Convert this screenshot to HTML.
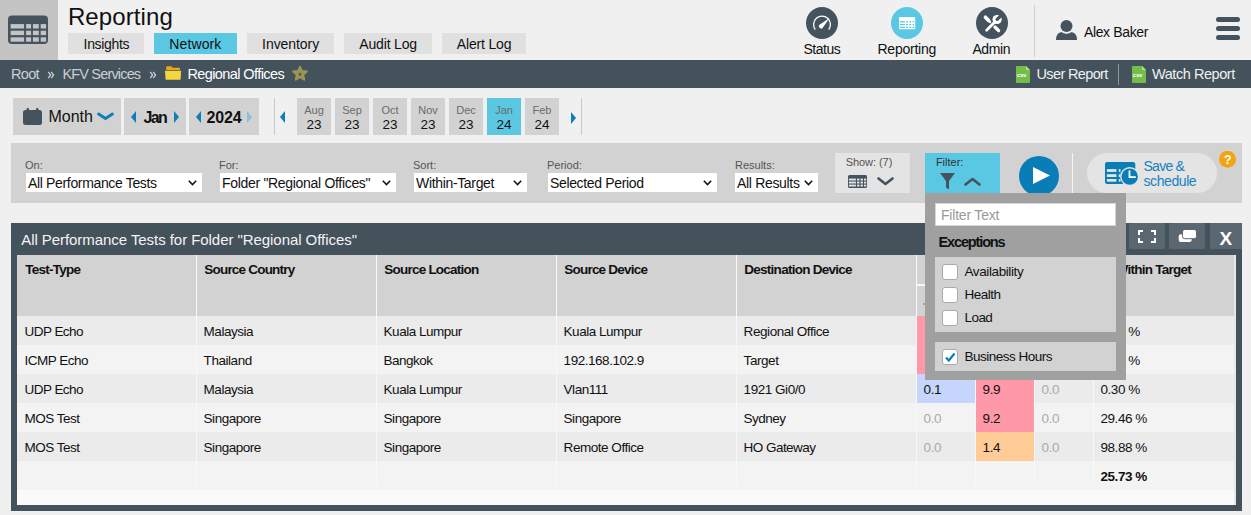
<!DOCTYPE html>
<html><head><meta charset="utf-8">
<style>
*{margin:0;padding:0;box-sizing:border-box}
html,body{width:1251px;height:515px;overflow:hidden;background:#f0f0f0;font-family:"Liberation Sans",sans-serif;color:#111}
.a{position:absolute}
.t{position:absolute;white-space:nowrap;line-height:1}
svg{position:absolute;display:block}
</style></head><body>
<div class="a" style="left:0px;top:0px;width:58px;height:60px;background:#c4c4c4;"></div>
<svg style="left:8px;top:15px" width="40" height="30" viewBox="0 0 40 30">
  <rect x="0" y="0.5" width="40" height="28.5" rx="4" fill="#45535e"/>
  <g fill="#c4c4c4">
    <rect x="2.6" y="9.1" width="13.5" height="4.4"/><rect x="18.1" y="9.1" width="5" height="4.4"/><rect x="24.9" y="9.1" width="5.9" height="4.4"/><rect x="32.7" y="9.1" width="5.4" height="4.4"/>
    <rect x="2.6" y="15.7" width="13.5" height="4.4"/><rect x="18.1" y="15.7" width="5" height="4.4"/><rect x="24.9" y="15.7" width="5.9" height="4.4"/><rect x="32.7" y="15.7" width="5.4" height="4.4"/>
    <rect x="2.6" y="22.3" width="13.5" height="4.4"/><rect x="18.1" y="22.3" width="5" height="4.4"/><rect x="24.9" y="22.3" width="5.9" height="4.4"/><rect x="32.7" y="22.3" width="5.4" height="4.4"/>
  </g>
</svg>
<div class="t" style="left:67.90px;top:4.88px;font-size:24px;color:#111;letter-spacing:0.104px;">Reporting</div>
<div class="a" style="left:68px;top:33px;width:76px;height:21px;background:#e0e0e0;"></div>
<div class="t" style="left:83.60px;top:37.05px;font-size:14px;color:#111;letter-spacing:-0.331px;">Insights</div>
<div class="a" style="left:154px;top:33px;width:83px;height:21px;background:#5bc8e3;"></div>
<div class="t" style="left:169.30px;top:37.05px;font-size:14px;color:#111;letter-spacing:0.122px;">Network</div>
<div class="a" style="left:247px;top:33px;width:87px;height:21px;background:#e0e0e0;"></div>
<div class="t" style="left:262.10px;top:37.05px;font-size:14px;color:#111;letter-spacing:-0.065px;">Inventory</div>
<div class="a" style="left:344px;top:33px;width:88px;height:21px;background:#e0e0e0;"></div>
<div class="t" style="left:359.30px;top:37.05px;font-size:14px;color:#111;letter-spacing:-0.173px;">Audit Log</div>
<div class="a" style="left:442px;top:33px;width:84px;height:21px;background:#e0e0e0;"></div>
<div class="t" style="left:456.80px;top:37.05px;font-size:14px;color:#111;letter-spacing:-0.171px;">Alert Log</div>
<svg style="left:806px;top:7px" width="32" height="32" viewBox="0 0 32 32">
  <circle cx="16" cy="16" r="16" fill="#45535e"/>
  <path d="M9.3 22.6 A8.4 8.4 0 1 1 22.7 22.6" fill="none" stroke="#fff" stroke-width="1.3"/>
  <path d="M23.6 10.9 L13.9 17.6 A2.1 2.1 0 1 0 16.9 20.4 Z" fill="#fff"/>
</svg>
<div class="t" style="left:803.40px;top:41.95px;font-size:14px;color:#111;letter-spacing:-0.465px;">Status</div>
<svg style="left:891px;top:7px" width="32" height="32" viewBox="0 0 32 32">
  <circle cx="16" cy="16" r="16" fill="#5bc8e3"/>
  <rect x="8" y="10" width="16.2" height="12.2" rx="1" fill="#fff"/>
  <g fill="#5bc8e3">
    <rect x="8.8" y="14.1" width="5.1" height="1.3"/><rect x="15" y="14.1" width="1.9" height="1.3"/><rect x="18.3" y="14.1" width="1.9" height="1.3"/><rect x="21.6" y="14.1" width="1.6" height="1.3"/>
    <rect x="8.8" y="16.9" width="5.1" height="1.3"/><rect x="15" y="16.9" width="1.9" height="1.3"/><rect x="18.3" y="16.9" width="1.9" height="1.3"/><rect x="21.6" y="16.9" width="1.6" height="1.3"/>
    <rect x="8.8" y="19.7" width="5.1" height="1.3"/><rect x="15" y="19.7" width="1.9" height="1.3"/><rect x="18.3" y="19.7" width="1.9" height="1.3"/><rect x="21.6" y="19.7" width="1.6" height="1.3"/>
  </g>
</svg>
<div class="t" style="left:877.50px;top:41.95px;font-size:14px;color:#111;letter-spacing:-0.245px;">Reporting</div>
<svg style="left:976px;top:7px" width="32" height="32" viewBox="0 0 32 32">
  <circle cx="16" cy="16" r="16" fill="#45535e"/>
  <path d="M9.6 10.4 L22.4 23.4" stroke="#fff" stroke-width="2.2" stroke-linecap="round"/>
  <path d="M9.4 10.2 L12.6 13.4" stroke="#fff" stroke-width="3.6" stroke-linecap="round"/>
  <path d="M19.2 20.2 L22.6 23.6" stroke="#fff" stroke-width="3.4" stroke-linecap="round"/>
  <path d="M11.2 22.6 L19.6 14.2" stroke="#45535e" stroke-width="4.6" stroke-linecap="round"/>
  <path d="M10.6 23.2 L19.6 14.2" stroke="#fff" stroke-width="2.8" stroke-linecap="round"/>
  <circle cx="21.1" cy="12.5" r="4.6" fill="#fff"/>
  <path d="M20.0 11.2 L22.3 13.5 L26.8 9.0 L24.5 6.7 Z" fill="#45535e"/>
  <circle cx="21.15" cy="12.35" r="1.6" fill="#45535e"/>
</svg>
<div class="t" style="left:972.40px;top:41.95px;font-size:14px;color:#111;letter-spacing:-0.357px;">Admin</div>
<div class="a" style="left:1034px;top:5px;width:1px;height:52px;background:#cfcfcf;"></div>
<svg style="left:1056px;top:20px" width="21" height="21" viewBox="0 0 21 21">
  <circle cx="10.5" cy="6" r="6" fill="#45535e"/>
  <path d="M0 20 Q0 12.5 6 12 Q10.5 14.5 15 12 Q21 12.5 21 20 Z" fill="#45535e"/>
  <path d="M6.2 12.4 Q10.5 14.6 14.8 12.4" fill="none" stroke="#f0f0f0" stroke-width="0.8"/>
</svg>
<div class="t" style="left:1084.00px;top:24.95px;font-size:14px;color:#111;letter-spacing:-0.370px;">Alex Baker</div>
<div class="a" style="left:1216px;top:17px;width:24px;height:5px;background:#45535e;border-radius:3px"></div>
<div class="a" style="left:1216px;top:26px;width:24px;height:5px;background:#45535e;border-radius:3px"></div>
<div class="a" style="left:1216px;top:35px;width:24px;height:5px;background:#45535e;border-radius:3px"></div>
<div class="a" style="left:0px;top:60px;width:1251px;height:28px;background:#44525c;"></div>
<div class="t" style="left:10.90px;top:66.53px;font-size:14.5px;color:#c9cfd3;letter-spacing:-0.632px;">Root</div>
<svg style="left:47px;top:71px" width="8" height="8" viewBox="0 0 8 8"><path d="M1.2 0.8 L3.6 4 L1.2 7.2 M4.2 0.8 L6.6 4 L4.2 7.2" fill="none" stroke="#c9cfd3" stroke-width="1.3"/></svg>
<div class="t" style="left:62.40px;top:66.53px;font-size:14.5px;color:#c9cfd3;letter-spacing:-0.827px;">KFV Services</div>
<svg style="left:148.5px;top:71px" width="8" height="8" viewBox="0 0 8 8"><path d="M1.2 0.8 L3.6 4 L1.2 7.2 M4.2 0.8 L6.6 4 L4.2 7.2" fill="none" stroke="#c9cfd3" stroke-width="1.3"/></svg>
<svg style="left:164px;top:66px" width="18" height="14" viewBox="0 0 18 14">
  <path d="M2.2 1.6 Q2.2 0.3 3.5 0.3 L6.8 0.3 Q7.7 0.3 8.2 1.1 L8.7 1.8 L15 1.8 Q16 1.8 16 2.8 L16 3.9 L2.2 3.9 Z" fill="#eea51a"/>
  <path d="M0.9 4.8 L17.1 4.8 L16.6 13.2 Q16.5 13.8 15.9 13.8 L2.3 13.8 Q1.7 13.8 1.6 13.2 Z" fill="#f5d63e"/>
</svg>
<div class="t" style="left:187.40px;top:66.53px;font-size:14.5px;color:#fff;letter-spacing:-0.589px;">Regional Offices</div>
<svg style="left:291px;top:64.5px" width="18" height="17" viewBox="0 0 18 17">
  <path d="M9 1.6 L11 6 L15.9 6.5 L12.3 9.8 L13.3 14.8 L9 12.3 L4.7 14.8 L5.7 9.8 L2.1 6.5 L7 6 Z" fill="#9a9553" stroke="#9a9553" stroke-width="1.8" stroke-linejoin="round"/>
  <path d="M9 7.2 L9.6 8.5 L11 8.6 L9.9 9.6 L10.2 11 L9 10.3 L7.8 11 L8.1 9.6 L7 8.6 L8.4 8.5 Z" fill="#44525c"/>
</svg>
<svg style="left:1016px;top:66px" width="14" height="17" viewBox="0 0 14 17">
  <path d="M1 0 L10 0 L14 4 L14 16 Q14 17 13 17 L1 17 Q0 17 0 16 L0 1 Q0 0 1 0 Z" fill="#74bd48"/>
  <path d="M10 0 L14 4 L10 4 Z" fill="#b4dc8c"/>
  <text x="0.8" y="11.2" font-family="Liberation Sans" font-size="6" font-weight="bold" fill="#fff" letter-spacing="-0.2">csv</text>
</svg>
<div class="t" style="left:1036.50px;top:66.53px;font-size:14.5px;color:#eef0f1;letter-spacing:-0.633px;">User Report</div>
<div class="a" style="left:1118px;top:64px;width:1px;height:21px;background:#8e979d;"></div>
<svg style="left:1132px;top:66px" width="14" height="17" viewBox="0 0 14 17">
  <path d="M1 0 L10 0 L14 4 L14 16 Q14 17 13 17 L1 17 Q0 17 0 16 L0 1 Q0 0 1 0 Z" fill="#74bd48"/>
  <path d="M10 0 L14 4 L10 4 Z" fill="#b4dc8c"/>
  <text x="0.8" y="11.2" font-family="Liberation Sans" font-size="6" font-weight="bold" fill="#fff" letter-spacing="-0.2">csv</text>
</svg>
<div class="t" style="left:1152.00px;top:66.53px;font-size:14.5px;color:#eef0f1;letter-spacing:-0.450px;">Watch Report</div>
<div class="a" style="left:13px;top:98px;width:108px;height:37px;background:#d2d2d2;"></div>
<svg style="left:23px;top:108px" width="19" height="17" viewBox="0 0 19 17">
  <rect x="0" y="2" width="19" height="15" rx="2.5" fill="#45535e"/>
  <rect x="3.5" y="0" width="2.5" height="4" rx="1" fill="#45535e"/>
  <rect x="13" y="0" width="2.5" height="4" rx="1" fill="#45535e"/>
</svg>
<div class="t" style="left:48.60px;top:109.36px;font-size:16px;color:#111;letter-spacing:-0.054px;">Month</div>
<svg style="left:97px;top:112px" width="17" height="9" viewBox="0 0 17 9">
  <path d="M1.6 2 L8.5 6.6 L15.4 2" fill="none" stroke="#0e7fb7" stroke-width="3" stroke-linecap="round" stroke-linejoin="round"/>
</svg>
<div class="a" style="left:124px;top:98px;width:62px;height:37px;background:#d2d2d2;"></div>
<svg style="left:131px;top:111px" width="5" height="12"><path d="M5 0 L0 6 L5 12 Z" fill="#0e7fb7"/></svg>
<div class="t" style="left:143.50px;top:109.56px;font-size:16px;color:#111;font-weight:bold;letter-spacing:-1.590px;">Jan</div>
<svg style="left:174px;top:111px" width="5" height="12"><path d="M0 0 L5 6 L0 12 Z" fill="#0e7fb7"/></svg>
<div class="a" style="left:189px;top:98px;width:70px;height:37px;background:#d2d2d2;"></div>
<svg style="left:196px;top:111px" width="5" height="12"><path d="M5 0 L0 6 L5 12 Z" fill="#0e7fb7"/></svg>
<div class="t" style="left:206.60px;top:109.56px;font-size:16px;color:#111;font-weight:bold;letter-spacing:-0.149px;">2024</div>
<svg style="left:247px;top:111px" width="5" height="12"><path d="M0 0 L5 6 L0 12 Z" fill="#8fbfd6"/></svg>
<div class="a" style="left:274px;top:98px;width:1px;height:37px;background:#c8c8c8;"></div>
<svg style="left:280px;top:111px" width="5" height="12"><path d="M5 0 L0 6 L5 12 Z" fill="#0e7fb7"/></svg>
<div class="a" style="left:297px;top:98px;width:34px;height:37px;background:#d2d2d2;"></div>
<div class="t" style="left:297px;width:34px;text-align:center;top:105.39px;font-size:11px;color:#6a6a6a">Aug</div>
<div class="t" style="left:297px;width:34px;text-align:center;top:117.87px;font-size:13.5px;color:#111">23</div>
<div class="a" style="left:335px;top:98px;width:34px;height:37px;background:#d2d2d2;"></div>
<div class="t" style="left:335px;width:34px;text-align:center;top:105.39px;font-size:11px;color:#6a6a6a">Sep</div>
<div class="t" style="left:335px;width:34px;text-align:center;top:117.87px;font-size:13.5px;color:#111">23</div>
<div class="a" style="left:373px;top:98px;width:34px;height:37px;background:#d2d2d2;"></div>
<div class="t" style="left:373px;width:34px;text-align:center;top:105.39px;font-size:11px;color:#6a6a6a">Oct</div>
<div class="t" style="left:373px;width:34px;text-align:center;top:117.87px;font-size:13.5px;color:#111">23</div>
<div class="a" style="left:411px;top:98px;width:34px;height:37px;background:#d2d2d2;"></div>
<div class="t" style="left:411px;width:34px;text-align:center;top:105.39px;font-size:11px;color:#6a6a6a">Nov</div>
<div class="t" style="left:411px;width:34px;text-align:center;top:117.87px;font-size:13.5px;color:#111">23</div>
<div class="a" style="left:449px;top:98px;width:34px;height:37px;background:#d2d2d2;"></div>
<div class="t" style="left:449px;width:34px;text-align:center;top:105.39px;font-size:11px;color:#6a6a6a">Dec</div>
<div class="t" style="left:449px;width:34px;text-align:center;top:117.87px;font-size:13.5px;color:#111">23</div>
<div class="a" style="left:487px;top:98px;width:34px;height:37px;background:#5bc8e3;"></div>
<div class="t" style="left:487px;width:34px;text-align:center;top:105.39px;font-size:11px;color:#6a6a6a">Jan</div>
<div class="t" style="left:487px;width:34px;text-align:center;top:117.87px;font-size:13.5px;color:#111">24</div>
<div class="a" style="left:525px;top:98px;width:34px;height:37px;background:#d2d2d2;"></div>
<div class="t" style="left:525px;width:34px;text-align:center;top:105.39px;font-size:11px;color:#6a6a6a">Feb</div>
<div class="t" style="left:525px;width:34px;text-align:center;top:117.87px;font-size:13.5px;color:#111">24</div>
<svg style="left:571px;top:112px" width="5" height="12"><path d="M0 0 L5 6 L0 12 Z" fill="#0e7fb7"/></svg>
<div class="a" style="left:581px;top:98px;width:1px;height:37px;background:#c8c8c8;"></div>
<div class="a" style="left:11px;top:143px;width:1231px;height:60px;background:#d2d2d2;"></div>
<div class="t" style="left:25.00px;top:159.69px;font-size:11px;color:#555;">On:</div>
<div class="a" style="left:26px;top:173px;width:176px;height:19px;background:#fff;"></div>
<div class="t" style="left:28.00px;top:175.95px;font-size:14px;color:#111;letter-spacing:-0.343px;">All Performance Tests</div>
<svg style="left:188px;top:180px" width="9" height="6" viewBox="0 0 9 6"><path d="M0.8 0.8 L4.5 4.6 L8.2 0.8" fill="none" stroke="#111" stroke-width="1.5"/></svg>
<div class="t" style="left:219.00px;top:159.69px;font-size:11px;color:#555;">For:</div>
<div class="a" style="left:220px;top:173px;width:176px;height:19px;background:#fff;"></div>
<div class="t" style="left:222.00px;top:175.95px;font-size:14px;color:#111;letter-spacing:-0.311px;">Folder &quot;Regional Offices&quot;</div>
<svg style="left:382px;top:180px" width="9" height="6" viewBox="0 0 9 6"><path d="M0.8 0.8 L4.5 4.6 L8.2 0.8" fill="none" stroke="#111" stroke-width="1.5"/></svg>
<div class="t" style="left:413.00px;top:159.69px;font-size:11px;color:#555;">Sort:</div>
<div class="a" style="left:414px;top:173px;width:113px;height:19px;background:#fff;"></div>
<div class="t" style="left:416.00px;top:175.95px;font-size:14px;color:#111;letter-spacing:-0.336px;">Within-Target</div>
<svg style="left:513px;top:180px" width="9" height="6" viewBox="0 0 9 6"><path d="M0.8 0.8 L4.5 4.6 L8.2 0.8" fill="none" stroke="#111" stroke-width="1.5"/></svg>
<div class="t" style="left:547.00px;top:159.69px;font-size:11px;color:#555;">Period:</div>
<div class="a" style="left:548px;top:173px;width:169px;height:19px;background:#fff;"></div>
<div class="t" style="left:550.00px;top:175.95px;font-size:14px;color:#111;letter-spacing:-0.349px;">Selected Period</div>
<svg style="left:703px;top:180px" width="9" height="6" viewBox="0 0 9 6"><path d="M0.8 0.8 L4.5 4.6 L8.2 0.8" fill="none" stroke="#111" stroke-width="1.5"/></svg>
<div class="t" style="left:735.00px;top:159.69px;font-size:11px;color:#555;">Results:</div>
<div class="a" style="left:735px;top:173px;width:83px;height:19px;background:#fff;"></div>
<div class="t" style="left:737.00px;top:175.95px;font-size:14px;color:#111;letter-spacing:-0.319px;">All Results</div>
<svg style="left:804px;top:180px" width="9" height="6" viewBox="0 0 9 6"><path d="M0.8 0.8 L4.5 4.6 L8.2 0.8" fill="none" stroke="#111" stroke-width="1.5"/></svg>
<div class="a" style="left:835px;top:153px;width:75px;height:40px;background:#e4e4e4;"></div>
<div class="t" style="left:845.70px;top:156.79px;font-size:11px;color:#555;letter-spacing:-0.053px;">Show: (7)</div>
<svg style="left:848px;top:175px" width="19" height="13" viewBox="0 0 19 13">
  <rect x="0" y="0" width="19" height="13" rx="1.5" fill="#45535e"/>
  <g fill="#e4e4e4">
    <rect x="0.9" y="3.6" width="7" height="1.9"/><rect x="9" y="3.6" width="2.4" height="1.9"/><rect x="12.5" y="3.6" width="2.5" height="1.9"/><rect x="16" y="3.6" width="2.2" height="1.9"/>
    <rect x="0.9" y="6.6" width="7" height="1.9"/><rect x="9" y="6.6" width="2.4" height="1.9"/><rect x="12.5" y="6.6" width="2.5" height="1.9"/><rect x="16" y="6.6" width="2.2" height="1.9"/>
    <rect x="0.9" y="9.6" width="7" height="1.9"/><rect x="9" y="9.6" width="2.4" height="1.9"/><rect x="12.5" y="9.6" width="2.5" height="1.9"/><rect x="16" y="9.6" width="2.2" height="1.9"/>
  </g>
</svg>
<svg style="left:877px;top:177px" width="17" height="9" viewBox="0 0 17 9">
  <path d="M1.5 1.5 L8.5 7 L15.5 1.5" fill="none" stroke="#45535e" stroke-width="2.6" stroke-linecap="round" stroke-linejoin="round"/>
</svg>
<div class="a" style="left:925px;top:153px;width:75px;height:40px;background:#5bc8e3;"></div>
<div class="t" style="left:935.90px;top:156.79px;font-size:11px;color:#333;">Filter:</div>
<svg style="left:940px;top:173px" width="15" height="17" viewBox="0 0 15 17">
  <path d="M0 0 L15 0 L9 8 L9 16.5 L6 14.5 L6 8 Z" fill="#45535e"/>
</svg>
<svg style="left:964px;top:177px" width="17" height="9" viewBox="0 0 17 9">
  <path d="M1.5 7.5 L8.5 2 L15.5 7.5" fill="none" stroke="#45535e" stroke-width="2.6" stroke-linecap="round" stroke-linejoin="round"/>
</svg>
<svg style="left:1019px;top:156px" width="40" height="40" viewBox="0 0 40 40">
  <circle cx="20" cy="20" r="20" fill="#0a7db6"/>
  <path d="M14 11 L31 19.5 L14 28 Z" fill="#fff"/>
</svg>
<div class="a" style="left:1072px;top:153px;width:1px;height:40px;background:#f4f4f4;"></div>
<div class="a" style="left:1087px;top:153px;width:130px;height:40px;background:#e4e4e4;border-radius:20px"></div>
<svg style="left:1105px;top:162px" width="36" height="25" viewBox="0 0 36 25">
  <rect x="0" y="0" width="30.3" height="22" rx="2.2" fill="#0b7db6"/>
  <g fill="#e4e4e4">
    <rect x="1.9" y="7.1" width="9.5" height="2.8"/><rect x="1.9" y="12.2" width="9.5" height="2.8"/><rect x="1.9" y="17" width="9.5" height="2.7"/>
    <rect x="13.8" y="7.1" width="1.7" height="2.8"/><rect x="13.8" y="12.2" width="1.7" height="2.8"/><rect x="13.8" y="17" width="1.7" height="2.7"/>
  </g>
  <circle cx="24.7" cy="14.6" r="9.6" fill="#e4e4e4"/>
  <circle cx="24.7" cy="14.6" r="8.2" fill="#0b7db6"/>
  <path d="M24.5 8.6 L24.5 15.2 L30.8 15.2" fill="none" stroke="#fff" stroke-width="1.8"/>
</svg>
<div class="t" style="left:1143.50px;top:158.65px;font-size:14px;color:#1681be;letter-spacing:-0.740px;">Save &amp;</div>
<div class="t" style="left:1143.50px;top:173.85px;font-size:14px;color:#1681be;letter-spacing:-0.418px;">schedule</div>
<svg style="left:1219px;top:151px" width="17" height="17" viewBox="0 0 17 17">
  <circle cx="8.5" cy="8.3" r="8.5" fill="#f2a514"/>
  <text x="8.7" y="12.9" font-family="Liberation Sans" font-size="12.5" font-weight="bold" fill="#fff" text-anchor="middle">?</text>
</svg>
<div class="a" style="left:11px;top:223px;width:1231px;height:288px;background:#44525c;"></div>
<div class="t" style="left:21.20px;top:232.30px;font-size:15px;color:#f4f4f4;letter-spacing:-0.056px;">All Performance Tests for Folder &quot;Regional Offices&quot;</div>
<div class="a" style="left:1129px;top:223px;width:36px;height:26px;background:#5a6670;"></div>
<svg style="left:1138px;top:230px" width="18" height="13" viewBox="0 0 18 13">
  <path d="M1 5 L1 1 L5 1 M13 1 L17 1 L17 5 M17 8 L17 12 L13 12 M5 12 L1 12 L1 8" fill="none" stroke="#fff" stroke-width="2"/>
</svg>
<div class="a" style="left:1169px;top:223px;width:36px;height:26px;background:#5a6670;"></div>
<svg style="left:1178px;top:229px" width="19" height="14" viewBox="0 0 19 14">
  <rect x="0.7" y="5.2" width="13" height="7.8" rx="2" fill="#fff"/>
  <rect x="4.5" y="0.5" width="14" height="9.2" rx="2.3" fill="#fff" stroke="#5a6670" stroke-width="1"/>
</svg>
<div class="a" style="left:1210px;top:223px;width:32px;height:26px;background:#5a6670;"></div>
<div class="t" style="left:1219.50px;top:228.92px;font-size:19px;color:#fff;font-weight:bold;letter-spacing:0.827px;">X</div>
<div class="a" style="left:17px;top:255px;width:1219px;height:250px;background:#fafafa;"></div>
<div class="a" style="left:17px;top:255px;width:1217px;height:61px;background:#d2d2d2;"></div>
<div class="t" style="left:25.30px;top:263.37px;font-size:13.5px;color:#111;font-weight:bold;letter-spacing:-0.755px;">Test-Type</div>
<div class="t" style="left:204.30px;top:263.37px;font-size:13.5px;color:#111;font-weight:bold;letter-spacing:-0.796px;">Source Country</div>
<div class="t" style="left:384.30px;top:263.37px;font-size:13.5px;color:#111;font-weight:bold;letter-spacing:-0.776px;">Source Location</div>
<div class="t" style="left:564.30px;top:263.37px;font-size:13.5px;color:#111;font-weight:bold;letter-spacing:-0.787px;">Source Device</div>
<div class="t" style="left:744.30px;top:263.37px;font-size:13.5px;color:#111;font-weight:bold;letter-spacing:-0.738px;">Destination Device</div>
<div class="t" style="left:1101.30px;top:263.37px;font-size:13.5px;color:#111;font-weight:bold;letter-spacing:-0.740px;">% Within Target</div>
<div class="a" style="left:17px;top:316px;width:1217px;height:29px;background:#ebebeb;"></div>
<div class="t" style="left:24.60px;top:324.87px;font-size:13.5px;color:#111;letter-spacing:-0.549px;">UDP Echo</div>
<div class="t" style="left:203.60px;top:324.87px;font-size:13.5px;color:#111;letter-spacing:-0.466px;">Malaysia</div>
<div class="t" style="left:383.60px;top:324.87px;font-size:13.5px;color:#111;letter-spacing:-0.490px;">Kuala Lumpur</div>
<div class="t" style="left:563.60px;top:324.87px;font-size:13.5px;color:#111;letter-spacing:-0.490px;">Kuala Lumpur</div>
<div class="t" style="left:743.60px;top:324.87px;font-size:13.5px;color:#111;letter-spacing:-0.430px;">Regional Office</div>
<div class="a" style="left:917px;top:316px;width:58px;height:29px;background:#ff98a8;"></div>
<div class="t" style="left:1100.60px;top:324.87px;font-size:13.5px;color:#111;letter-spacing:-0.490px;">0.00 %</div>
<div class="a" style="left:17px;top:345px;width:1217px;height:29px;background:#f3f3f3;"></div>
<div class="t" style="left:24.60px;top:353.87px;font-size:13.5px;color:#111;letter-spacing:-0.529px;">ICMP Echo</div>
<div class="t" style="left:203.60px;top:353.87px;font-size:13.5px;color:#111;letter-spacing:-0.453px;">Thailand</div>
<div class="t" style="left:383.60px;top:353.87px;font-size:13.5px;color:#111;letter-spacing:-0.525px;">Bangkok</div>
<div class="t" style="left:563.60px;top:353.87px;font-size:13.5px;color:#111;letter-spacing:-0.465px;">192.168.102.9</div>
<div class="t" style="left:743.60px;top:353.87px;font-size:13.5px;color:#111;letter-spacing:-0.438px;">Target</div>
<div class="a" style="left:917px;top:345px;width:58px;height:29px;background:#ff98a8;"></div>
<div class="t" style="left:1100.60px;top:353.87px;font-size:13.5px;color:#111;letter-spacing:-0.490px;">0.00 %</div>
<div class="a" style="left:17px;top:374px;width:1217px;height:29px;background:#ebebeb;"></div>
<div class="t" style="left:24.60px;top:382.87px;font-size:13.5px;color:#111;letter-spacing:-0.549px;">UDP Echo</div>
<div class="t" style="left:203.60px;top:382.87px;font-size:13.5px;color:#111;letter-spacing:-0.466px;">Malaysia</div>
<div class="t" style="left:383.60px;top:382.87px;font-size:13.5px;color:#111;letter-spacing:-0.490px;">Kuala Lumpur</div>
<div class="t" style="left:563.60px;top:382.87px;font-size:13.5px;color:#111;letter-spacing:-0.475px;">Vlan111</div>
<div class="t" style="left:743.60px;top:382.87px;font-size:13.5px;color:#111;letter-spacing:-0.462px;">1921 Gi0/0</div>
<div class="a" style="left:917px;top:374px;width:58px;height:29px;background:#c5d5fb;"></div>
<div class="t" style="left:923.60px;top:382.87px;font-size:13.5px;color:#111;letter-spacing:-0.438px;">0.1</div>
<div class="a" style="left:976px;top:374px;width:58px;height:29px;background:#ff98a8;"></div>
<div class="t" style="left:982.60px;top:382.87px;font-size:13.5px;color:#111;letter-spacing:-0.438px;">9.9</div>
<div class="t" style="left:1041.60px;top:382.87px;font-size:13.5px;color:#aaa;letter-spacing:-0.438px;">0.0</div>
<div class="t" style="left:1100.60px;top:382.87px;font-size:13.5px;color:#111;letter-spacing:-0.490px;">0.30 %</div>
<div class="a" style="left:17px;top:403px;width:1217px;height:29px;background:#f3f3f3;"></div>
<div class="t" style="left:24.60px;top:411.87px;font-size:13.5px;color:#111;letter-spacing:-0.516px;">MOS Test</div>
<div class="t" style="left:203.60px;top:411.87px;font-size:13.5px;color:#111;letter-spacing:-0.479px;">Singapore</div>
<div class="t" style="left:383.60px;top:411.87px;font-size:13.5px;color:#111;letter-spacing:-0.479px;">Singapore</div>
<div class="t" style="left:563.60px;top:411.87px;font-size:13.5px;color:#111;letter-spacing:-0.479px;">Singapore</div>
<div class="t" style="left:743.60px;top:411.87px;font-size:13.5px;color:#111;letter-spacing:-0.525px;">Sydney</div>
<div class="t" style="left:923.60px;top:411.87px;font-size:13.5px;color:#aaa;letter-spacing:-0.438px;">0.0</div>
<div class="a" style="left:976px;top:403px;width:58px;height:29px;background:#ff98a8;"></div>
<div class="t" style="left:982.60px;top:411.87px;font-size:13.5px;color:#111;letter-spacing:-0.438px;">9.2</div>
<div class="t" style="left:1041.60px;top:411.87px;font-size:13.5px;color:#aaa;letter-spacing:-0.438px;">0.0</div>
<div class="t" style="left:1100.60px;top:411.87px;font-size:13.5px;color:#111;letter-spacing:-0.495px;">29.46 %</div>
<div class="a" style="left:17px;top:432px;width:1217px;height:29px;background:#ebebeb;"></div>
<div class="t" style="left:24.60px;top:440.87px;font-size:13.5px;color:#111;letter-spacing:-0.516px;">MOS Test</div>
<div class="t" style="left:203.60px;top:440.87px;font-size:13.5px;color:#111;letter-spacing:-0.479px;">Singapore</div>
<div class="t" style="left:383.60px;top:440.87px;font-size:13.5px;color:#111;letter-spacing:-0.479px;">Singapore</div>
<div class="t" style="left:563.60px;top:440.87px;font-size:13.5px;color:#111;letter-spacing:-0.463px;">Remote Office</div>
<div class="t" style="left:743.60px;top:440.87px;font-size:13.5px;color:#111;letter-spacing:-0.541px;">HO Gateway</div>
<div class="t" style="left:923.60px;top:440.87px;font-size:13.5px;color:#aaa;letter-spacing:-0.438px;">0.0</div>
<div class="a" style="left:976px;top:432px;width:58px;height:29px;background:#ffcb96;"></div>
<div class="t" style="left:982.60px;top:440.87px;font-size:13.5px;color:#111;letter-spacing:-0.438px;">1.4</div>
<div class="t" style="left:1041.60px;top:440.87px;font-size:13.5px;color:#aaa;letter-spacing:-0.438px;">0.0</div>
<div class="t" style="left:1100.60px;top:440.87px;font-size:13.5px;color:#111;letter-spacing:-0.495px;">98.88 %</div>
<div class="a" style="left:17px;top:461px;width:1217px;height:29px;background:#f3f3f3;"></div>
<div class="t" style="left:1100.60px;top:469.87px;font-size:13.5px;color:#111;font-weight:bold;letter-spacing:-0.495px;">25.73 %</div>
<div class="a" style="left:196px;top:255px;width:1px;height:231px;background:#f8f8f8;"></div>
<div class="a" style="left:376px;top:255px;width:1px;height:231px;background:#f8f8f8;"></div>
<div class="a" style="left:556px;top:255px;width:1px;height:231px;background:#f8f8f8;"></div>
<div class="a" style="left:736px;top:255px;width:1px;height:231px;background:#f8f8f8;"></div>
<div class="a" style="left:916px;top:255px;width:1px;height:231px;background:#f8f8f8;"></div>
<div class="a" style="left:975px;top:255px;width:1px;height:231px;background:#f8f8f8;"></div>
<div class="a" style="left:1034px;top:255px;width:1px;height:231px;background:#f8f8f8;"></div>
<div class="a" style="left:1093px;top:255px;width:1px;height:231px;background:#f8f8f8;"></div>
<div class="a" style="left:916px;top:284px;width:177px;height:2px;background:#f8f8f8;"></div>
<div class="a" style="left:923px;top:303px;width:2px;height:2px;background:#e0a040;"></div>
<div class="a" style="left:1234px;top:255px;width:2px;height:250px;background:#e8e8e8;"></div>
<div class="a" style="left:925px;top:193px;width:201px;height:187px;background:#a0a0a0;"></div>
<div class="a" style="left:935px;top:203px;width:181px;height:23px;background:#fff;border:1px solid #d6d6d6"></div>
<div class="t" style="left:941.00px;top:208.15px;font-size:14px;color:#999;letter-spacing:-0.202px;">Filter Text</div>
<div class="t" style="left:938.50px;top:235.33px;font-size:14.5px;color:#111;font-weight:bold;letter-spacing:-1.136px;">Exceptions</div>
<div class="a" style="left:935px;top:257px;width:181px;height:75px;background:#d2d2d2;"></div>
<div class="a" style="left:935px;top:342px;width:181px;height:29px;background:#d2d2d2;"></div>
<div class="a" style="left:942px;top:264px;width:16px;height:16px;background:#fff;border-radius:3px;border:1px solid #aaa"></div>
<div class="t" style="left:964.50px;top:265.37px;font-size:13.5px;color:#111;letter-spacing:-0.397px;">Availability</div>
<div class="a" style="left:942px;top:287px;width:16px;height:16px;background:#fff;border-radius:3px;border:1px solid #aaa"></div>
<div class="t" style="left:964.50px;top:288.37px;font-size:13.5px;color:#111;letter-spacing:-0.488px;">Health</div>
<div class="a" style="left:942px;top:310px;width:16px;height:16px;background:#fff;border-radius:3px;border:1px solid #aaa"></div>
<div class="t" style="left:964.50px;top:311.37px;font-size:13.5px;color:#111;letter-spacing:-0.563px;">Load</div>
<div class="a" style="left:942px;top:349px;width:16px;height:16px;background:#fff;border-radius:3px;border:1px solid #aaa"></div>
<svg style="left:944px;top:351px" width="12" height="12" viewBox="0 0 12 12"><path d="M2 6.5 L4.8 9.5 L10.5 2.5" fill="none" stroke="#0e7fb7" stroke-width="2.2"/></svg>
<div class="t" style="left:964.50px;top:350.37px;font-size:13.5px;color:#111;letter-spacing:-0.510px;">Business Hours</div>
</body></html>
